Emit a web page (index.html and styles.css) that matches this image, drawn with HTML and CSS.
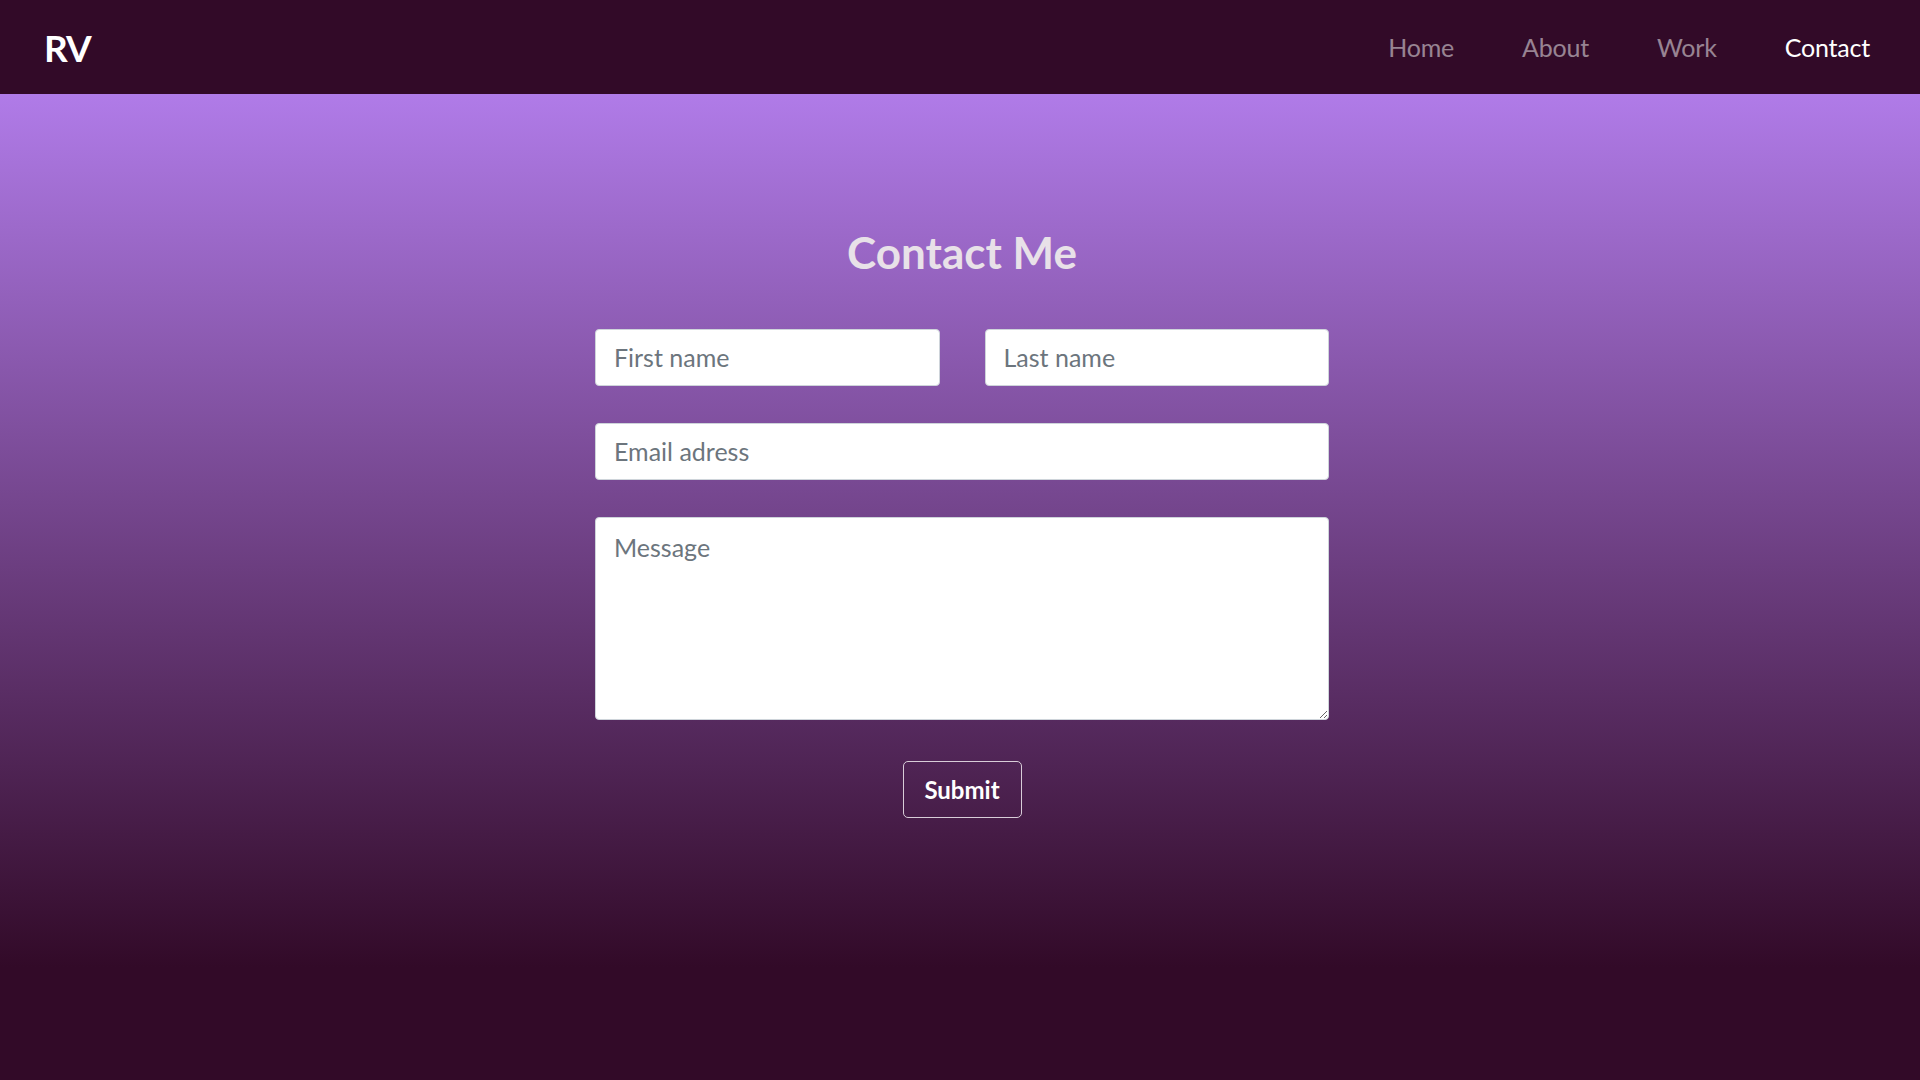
FILE: index.html
```html
<!DOCTYPE html>
<html lang="en">
<head>
<meta charset="utf-8">
<title>Contact</title>
<link rel="stylesheet" href="styles.css">
</head>
<body>
<div class="page">
  <header class="nav">
    <a class="logo" href="#">RV</a>
    <nav class="links">
      <a href="#" class="link">Home</a>
      <a href="#" class="link">About</a>
      <a href="#" class="link">Work</a>
      <a href="#" class="link active">Contact</a>
    </nav>
  </header>
  <main class="main">
    <section class="contact">
      <h1 class="title">Contact Me</h1>
      <form class="form">
        <div class="row">
          <input class="field" type="text" placeholder="First name">
          <input class="field" type="text" placeholder="Last name">
        </div>
        <input class="field" type="email" placeholder="Email adress">
        <textarea class="field area" placeholder="Message"></textarea>
        <div class="actions">
          <button type="button" class="submit">Submit</button>
        </div>
      </form>
    </section>
  </main>
</div>
</body>
</html>
```

FILE: styles.css
```css
* { box-sizing: border-box; }
html, body { margin: 0; padding: 0; }
body {
  background: #320a28;
  font-family: Lato, "Open Sans", sans-serif;
}
.page {
  min-height: 100vh;
  display: flex;
  flex-direction: column;
}
.nav {
  height: 94px;
  flex: 0 0 94px;
  background: #320a28;
  display: flex;
  align-items: center;
  justify-content: space-between;
  padding: 0 50px 0 44px;
}
.logo {
  color: #ffffff;
  text-decoration: none;
  font-weight: 700;
  font-size: 37px;
  letter-spacing: -1px;
  line-height: 1;
}
.links {
  display: flex;
  gap: 68px;
  align-items: center;
}
.link {
  color: rgba(255, 255, 255, 0.5);
  text-decoration: none;
  font-size: 25px;
  letter-spacing: -0.2px;
  line-height: 1;
}
.link.active { color: #ffffff; }
.main {
  flex: 1;
  background: linear-gradient(180deg, #b07be8 0px, #320a28 873px, #320a28 100%);
  display: flex;
  justify-content: center;
  padding-left: 4px;
}
.contact {
  width: 734px;
  padding-top: 132px;
  display: flex;
  flex-direction: column;
  align-items: stretch;
}
.title {
  margin: 0 0 50px;
  text-align: center;
  font-size: 44px;
  line-height: 1.2;
  font-weight: 700;
  color: #e8e1e8;
}
.form {
  display: flex;
  flex-direction: column;
  gap: 37px;
}
.row {
  display: grid;
  grid-template-columns: 1fr 1fr;
  column-gap: 45px;
}
.field {
  display: block;
  width: 100%;
  height: 57px;
  padding: 0 18px;
  border: 1px solid #ced4da;
  border-radius: 4px;
  background: #ffffff;
  font-family: Lato, "Open Sans", sans-serif;
  font-size: 25px;
  color: #495057;
  outline: none;
}
.field::placeholder { color: #6c757d; }
.area {
  height: 203px;
  padding-top: 11px;
  line-height: 1.5;
  resize: vertical;
}
.actions {
  display: flex;
  justify-content: center;
  margin-top: 4px;
}
.submit {
  width: 119px;
  height: 57px;
  background: transparent;
  border: 1.5px solid #d8cdd8;
  border-radius: 5px;
  color: #ffffff;
  font-family: Lato, "Open Sans", sans-serif;
  font-weight: 700;
  font-size: 24px;
  cursor: pointer;
}
```
